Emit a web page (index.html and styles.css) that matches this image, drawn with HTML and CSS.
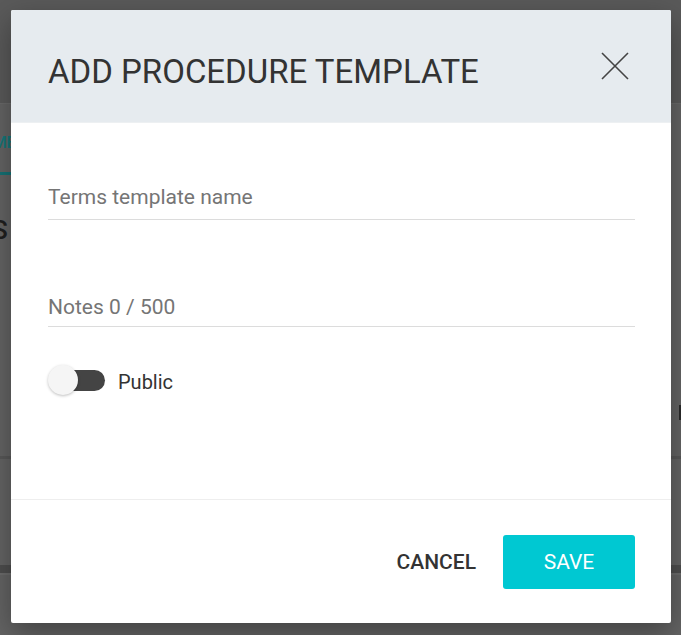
FILE: index.html
```html
<!DOCTYPE html>
<html>
<head>
<meta charset="utf-8">
<link rel="stylesheet" href="styles.css">
</head>
<body>
<div class="backdrop">
  <div class="bg-top"></div>
  <div class="bg-tabs">
    <span class="bg-tab">ME</span>
    <span class="bg-tab-line"></span>
  </div>
  <div class="bg-heading">S</div>
  <div class="bg-rule"></div>
  <div class="bg-band"></div>
  <span class="bg-mark"></span>
</div>

<div class="dialog">
  <div class="dialog-header">
    <h1 class="dialog-title">ADD PROCEDURE TEMPLATE</h1>
    <button class="close-btn" aria-label="Close">
      <svg width="28" height="28" viewBox="0 0 28 28"><path d="M1 1 L27 27 M27 1 L1 27" stroke="#444" stroke-width="1.6" fill="none"/></svg>
    </button>
  </div>
  <div class="dialog-body">
    <div class="field field-name"><span class="field-label">Terms template name</span></div>
    <div class="field field-notes"><span class="field-label">Notes 0 / 500</span></div>
    <div class="toggle-row">
      <span class="switch"><span class="switch-track"></span><span class="switch-thumb"></span></span>
      <span class="toggle-label">Public</span>
    </div>
  </div>
  <div class="dialog-footer">
    <button class="btn-cancel">CANCEL</button>
    <button class="btn-save">SAVE</button>
  </div>
</div>
</body>
</html>
```
FILE: styles.css
```css
html, body {
  margin: 0;
  padding: 0;
}
body {
  width: 681px;
  height: 635px;
  overflow: hidden;
  font-family: Roboto, "Liberation Sans", sans-serif;
  background: #646464;
  position: relative;
}
.backdrop {
  height: 635px;
  display: flex;
  flex-direction: column;
  position: relative;
}
.bg-top {
  height: 103px;
  background: #5a5a5a;
  border-bottom: 1px solid #6a6a6a;
}
.bg-tabs {
  height: 71px;
  display: flex;
  flex-direction: column;
  justify-content: flex-end;
}
.bg-tab {
  color: #16777a;
  font-weight: 500;
  font-size: 17px;
  line-height: 20px;
  margin-left: -8px;
  margin-bottom: 20px;
  letter-spacing: -0.5px;
  white-space: nowrap;
}
.bg-tab-line {
  width: 12px;
  height: 3px;
  background: #157275;
}
.bg-heading {
  margin-top: 40px;
  margin-left: -8px;
  font-size: 26px;
  font-weight: 500;
  color: #1f1f1f;
  line-height: 30px;
}
.bg-rule {
  margin-top: 211px;
  height: 3px;
  background: #585858;
}
.bg-band {
  margin-top: 106px;
  height: 8px;
  background: #4e4e4e;
  border-bottom: 2px solid #6c6c6c;
}
.bg-mark {
  position: absolute;
  right: 0;
  top: 405px;
  width: 2px;
  height: 15px;
  background: #2a2a2a;
}

.dialog {
  position: absolute;
  left: 11px;
  top: 10px;
  width: 660px;
  height: 613px;
  background: #fff;
  border-radius: 2px;
  box-shadow: 0 10px 30px rgba(0,0,0,0.35);
  display: flex;
  flex-direction: column;
  overflow: hidden;
}
.dialog-header {
  height: 112px;
  background: #e6ebef;
  border-bottom: 1px solid #edf0f2;
  display: flex;
  align-items: flex-start;
  justify-content: space-between;
  padding: 0 42px 0 37px;
  flex-shrink: 0;
}
.dialog-title {
  margin: 42px 0 0 0;
  font-size: 33px;
  line-height: 40px;
  font-weight: 400;
  color: #333;
  letter-spacing: 0;
}
.close-btn {
  margin-top: 42px;
  padding: 0;
  border: 0;
  background: none;
  width: 28px;
  height: 28px;
  display: block;
}
.close-btn svg {
  display: block;
}
.dialog-body {
  flex: 1;
  padding: 0 36px 0 37px;
  display: flex;
  flex-direction: column;
}
.field {
  border-bottom: 1px solid #dcdcdc;
  display: flex;
}
.field-label {
  font-size: 21px;
  line-height: 24px;
  color: #757575;
}
.field-name {
  margin-top: 62px;
  padding-bottom: 10px;
}
.field-notes {
  margin-top: 75px;
  padding-bottom: 7px;
}
.toggle-row {
  margin-top: 38px;
  display: flex;
  align-items: center;
  height: 30px;
}
.switch {
  position: relative;
  width: 57px;
  height: 30px;
  display: block;
}
.switch-track {
  position: absolute;
  left: 5px;
  top: 5px;
  width: 52px;
  height: 21px;
  border-radius: 11px;
  background: #444;
}
.switch-thumb {
  position: absolute;
  left: 0;
  top: 0;
  width: 30px;
  height: 30px;
  border-radius: 50%;
  background: #f5f5f5;
  box-shadow: 0 1px 3px rgba(0,0,0,0.25);
}
.toggle-label {
  margin-left: 13px;
  margin-top: 3px;
  font-size: 20px;
  color: #333;
}
.dialog-footer {
  border-top: 1px solid #eeeeee;
  height: 124px;
  box-sizing: border-box;
  display: flex;
  align-items: center;
  justify-content: flex-end;
  padding: 0 36px 0 0;
  flex-shrink: 0;
}
.btn-cancel {
  border: 0;
  background: none;
  padding: 0;
  font-family: Roboto, "Liberation Sans", sans-serif;
  font-size: 21px;
  font-weight: 500;
  color: #333;
  margin-right: 27px;
}
.btn-save {
  width: 132px;
  height: 54px;
  border: 0;
  border-radius: 3px;
  background: #00c8d2;
  color: #fff;
  font-family: Roboto, "Liberation Sans", sans-serif;
  font-size: 21px;
  font-weight: 400;
  padding: 0;
}
```
